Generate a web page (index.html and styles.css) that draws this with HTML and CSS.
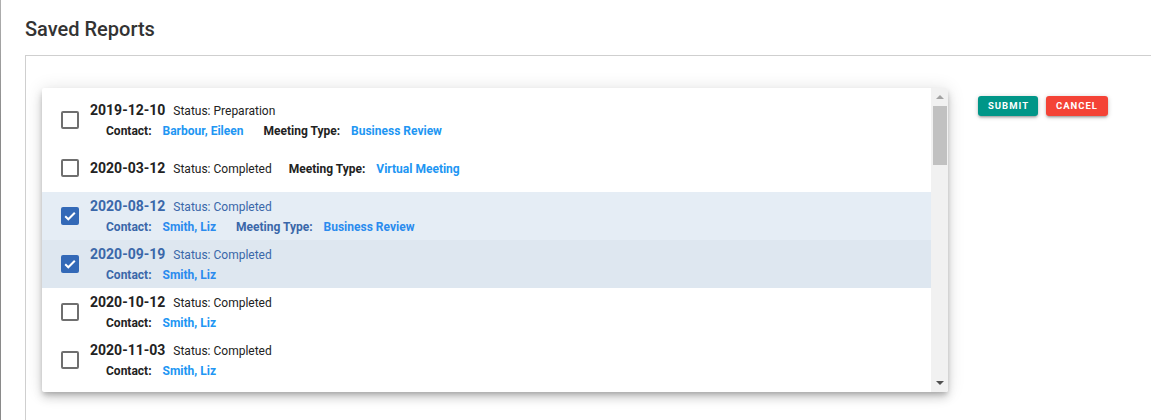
FILE: index.html
```html
<!DOCTYPE html>
<html lang="en">
<head>
<meta charset="utf-8">
<title>Saved Reports</title>
<link rel="stylesheet" href="styles.css">
</head>
<body>
<div class="edge"></div>
<main class="page">
  <h1 class="title">Saved Reports</h1>
  <section class="panel">
    <div class="card">
      <ul class="list">
        <li class="row">
          <span class="cb"></span>
          <div class="text">
            <div class="line1"><span class="date">2019-12-10</span><span class="status">Status: Preparation</span></div>
            <div class="line2"><span class="field"><span class="label">Contact:</span><span class="value">Barbour, Eileen</span></span><span class="field"><span class="label">Meeting Type:</span><span class="value">Business Review</span></span></div>
          </div>
        </li>
        <li class="row">
          <span class="cb"></span>
          <div class="text">
            <div class="line1"><span class="date">2020-03-12</span><span class="status">Status: Completed</span><span class="field inline"><span class="label">Meeting Type:</span><span class="value">Virtual Meeting</span></span></div>
          </div>
        </li>
        <li class="row sel sel-a">
          <span class="cb on"><svg viewBox="0 0 18 18" width="18" height="18"><path d="M4.2 9.3l3.1 3 6.5-6.5" fill="none" stroke="#fff" stroke-width="2"/></svg></span>
          <div class="text">
            <div class="line1"><span class="date">2020-08-12</span><span class="status">Status: Completed</span></div>
            <div class="line2"><span class="field"><span class="label">Contact:</span><span class="value">Smith, Liz</span></span><span class="field"><span class="label">Meeting Type:</span><span class="value">Business Review</span></span></div>
          </div>
        </li>
        <li class="row sel sel-b">
          <span class="cb on"><svg viewBox="0 0 18 18" width="18" height="18"><path d="M4.2 9.3l3.1 3 6.5-6.5" fill="none" stroke="#fff" stroke-width="2"/></svg></span>
          <div class="text">
            <div class="line1"><span class="date">2020-09-19</span><span class="status">Status: Completed</span></div>
            <div class="line2"><span class="field"><span class="label">Contact:</span><span class="value">Smith, Liz</span></span></div>
          </div>
        </li>
        <li class="row">
          <span class="cb"></span>
          <div class="text">
            <div class="line1"><span class="date">2020-10-12</span><span class="status">Status: Completed</span></div>
            <div class="line2"><span class="field"><span class="label">Contact:</span><span class="value">Smith, Liz</span></span></div>
          </div>
        </li>
        <li class="row">
          <span class="cb"></span>
          <div class="text">
            <div class="line1"><span class="date">2020-11-03</span><span class="status">Status: Completed</span></div>
            <div class="line2"><span class="field"><span class="label">Contact:</span><span class="value">Smith, Liz</span></span></div>
          </div>
        </li>
      </ul>
      <div class="scrollbar">
        <span class="arrow up"></span>
        <span class="thumb"></span>
        <span class="spacer"></span>
        <span class="arrow down"></span>
      </div>
    </div>
    <div class="actions">
      <button class="btn submit">Submit</button>
      <button class="btn cancel">Cancel</button>
    </div>
  </section>
</main>
</body>
</html>
```

FILE: styles.css
```css
html, body {
  margin: 0;
  padding: 0;
  background: #fff;
  height: 420px;
  overflow: hidden;
}
body {
  font-family: Roboto, "Liberation Sans", Arial, sans-serif;
  color: #222;
  display: flex;
}
.edge {
  width: 1px;
  flex: none;
  height: 420px;
  background: linear-gradient(#b0b0b0, #8a8a8a 30%, #8a8a8a);
}
.page {
  flex: 1;
  padding-left: 24px;
  min-width: 0;
}
.title {
  margin: 0;
  padding-top: 17px;
  height: 55px;
  box-sizing: border-box;
  font-size: 20px;
  font-weight: 500;
  line-height: 24px;
  color: #333;
}
.panel {
  border-top: 1px solid #cfcfcf;
  border-left: 1px solid #cfcfcf;
  height: 370px;
  padding: 32px 0 0 16px;
  box-sizing: border-box;
  display: flex;
  align-items: flex-start;
}
.card {
  width: 906px;
  height: 304px;
  flex: none;
  display: flex;
  background: #fff;
  box-shadow: 0 3px 5px -1px rgba(0,0,0,.2), 0 6px 10px 0 rgba(0,0,0,.14), 0 1px 18px 0 rgba(0,0,0,.12);
  border-radius: 2px;
  overflow: hidden;
}
.list {
  list-style: none;
  margin: 0;
  padding: 8px 0;
  flex: 1;
}
.row {
  height: 48px;
  display: flex;
  align-items: center;
  padding-left: 19px;
}
.sel-a { background: #e5edf5; }
.sel-b { background: #dee7f0; }
.cb {
  width: 18px;
  height: 18px;
  box-sizing: border-box;
  border: 2px solid #6f6f6f;
  border-radius: 2px;
  flex: none;
  margin-right: 11px;
}
.cb.on {
  border: none;
  background: #3369b7;
}
.cb svg { display: block; }
.text {
  display: flex;
  flex-direction: column;
}
.line1 {
  display: flex;
  align-items: baseline;
  height: 18px;
  line-height: 18px;
}
.line2 {
  display: flex;
  align-items: baseline;
  height: 18px;
  line-height: 18px;
  margin-top: 3px;
  padding-left: 16px;
}
.row .text:has(.line2) { margin-top: 0; }
.date {
  font-size: 14px;
  font-weight: 700;
  color: #222;
  margin-right: 8px;
}
.status {
  font-size: 12px;
  color: #222;
}
.field {
  font-size: 12px;
  font-weight: 700;
  margin-right: 20px;
}
.field.inline { margin-left: 17px; }
.label {
  color: #222;
  margin-right: 11px;
}
.value {
  color: #2196f3;
}
.sel .date { color: #3a67a9; }
.sel .status { color: #3a67a9; }
.sel .label { color: #3a67a9; }
.sel .value { color: #2a8bee; }
.scrollbar {
  width: 17px;
  flex: none;
  background: #f1f1f1;
  display: flex;
  flex-direction: column;
  align-items: center;
}
.arrow {
  width: 0;
  height: 0;
  border-left: 4px solid transparent;
  border-right: 4px solid transparent;
  flex: none;
}
.arrow.up {
  border-bottom: 4px solid #a3a3a3;
  margin-top: 7px;
}
.arrow.down {
  border-top: 4px solid #505050;
  margin-bottom: 7px;
}
.thumb {
  width: 14px;
  height: 59px;
  background: #c1c1c1;
  margin-top: 7px;
  flex: none;
}
.spacer { flex: 1; }
.actions {
  display: flex;
  gap: 8px;
  margin-left: 30px;
  margin-top: 8px;
}
.btn {
  height: 20px;
  border: none;
  border-radius: 3px;
  color: #fff;
  font-family: Roboto, "Liberation Sans", Arial, sans-serif;
  font-size: 9.5px;
  font-weight: 700;
  letter-spacing: 1px;
  text-transform: uppercase;
  padding: 0 10px;
  box-shadow: 0 2px 2px 0 rgba(0,0,0,.14), 0 3px 1px -2px rgba(0,0,0,.12), 0 1px 5px 0 rgba(0,0,0,.2);
  line-height: 20px;
}
.submit { background: #009688; width: 60px; }
.cancel { background: #f44336; width: 62px; }
```
